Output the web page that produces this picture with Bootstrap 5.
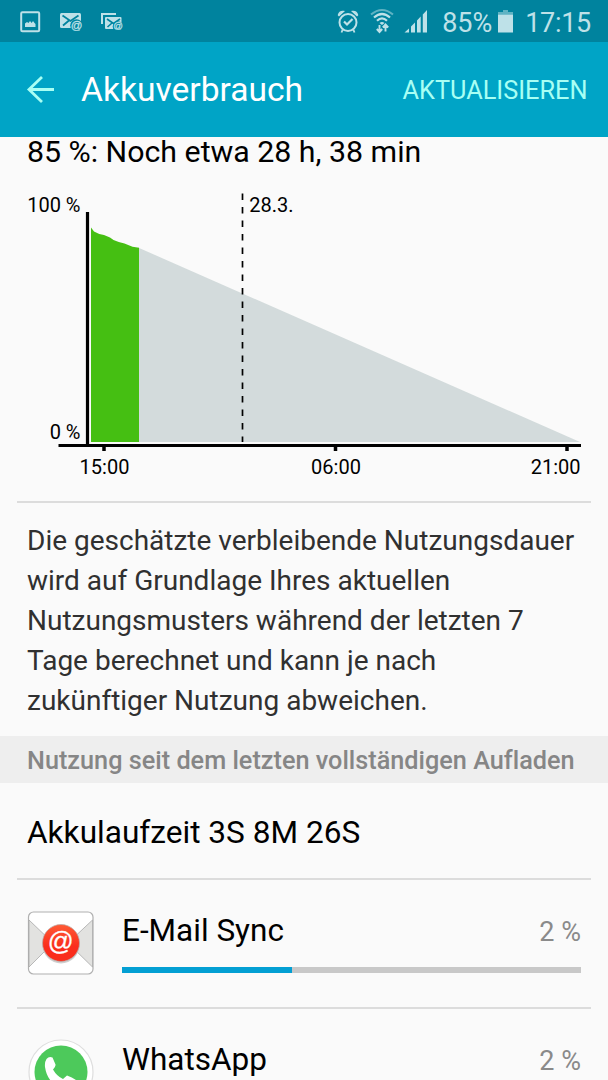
<!DOCTYPE html>
<html lang="de">
<head>
<meta charset="utf-8">
<meta name="viewport" content="width=device-width, initial-scale=1">
<title>Akkuverbrauch</title>
<link rel="stylesheet" href="https://cdn.jsdelivr.net/npm/bootstrap@5.3.0/dist/css/bootstrap.min.css">
<style>
  html, body { height: 1080px; overflow: hidden; }
  body { font-family: Roboto, sans-serif; background: #fafafa; color: #000; line-height: 1; font-variant-ligatures: none; }
  .status-bar { height: 42px; background: #00839e; color: #bee1e8; }
  .status-bar svg { display: block; flex: none; }
  .status-text { font-size: 27px; line-height: 38px; padding-top: 4px; white-space: nowrap; }
  .status-clock { letter-spacing: -.3px; margin: 0 17px 0 5px; }
  .app-bar { height: 94.5px; background: #00a4c6; }
  .app-title { font-size: 33.6px; color: #fff; white-space: nowrap; padding-top: 2px; margin-left: -1px; }
  .app-action { font-size: 25.3px; color: #a8fff4; white-space: nowrap; text-transform: uppercase; padding-top: 2px; margin-right: 20.5px; }
  .estimate { font-size: 30.3px; height: 46.5px; line-height: 30px; padding-left: 27px; }
  .usage-chart { display: block; height: 317.500px; }
  .usage-chart text { font-size: 20px; fill: #000; }
  .rule { height: 2px; margin: 0 17px; background: #dcdcdc; flex: none; }
  .note { font-size: 28px; line-height: 40px; color: #303030; padding: 18px 0 15.5px 27px; }
  .section-head { height: 47px; background: #eee; color: #868686; font-size: 25.250px; font-weight: 500; line-height: 49px; padding-left: 27px; white-space: nowrap; }
  .runtime { height: 95px; font-size: 31.600px; line-height: 100px; padding-left: 27px; }
  .app-row { height: 126.500px; padding: 0 27px; }
  .app-row-cut { height: 72px; overflow: hidden; }
  .app-icon { width: 67px; flex: none; }
  .mail-at { font-family: "Liberation Sans", sans-serif; }
  .app-body { margin-left: 28px; padding-top: 29px; }
  .app-name { font-size: 31.500px; line-height: 44px; }
  .app-share { font-size: 27px; line-height: 46px; color: #8a8a8a; }
  .usage-bar { height: 6px; border-radius: 0; background: #c8c8c8; margin-top: 12px; }
  .usage-bar .progress-bar { background: #039fd3; }
</style>
</head>
<body>
<div class="status-bar d-flex align-items-center">
  <svg width="140" height="42" viewBox="0 0 140 42" fill="none" stroke="#bee1e8">
    <rect x="21.200" y="12.200" width="18" height="19" rx="1.200" stroke-width="2"/>
    <path d="M25 27v-3.500l2-1.500 1.500 1 1.500-2 1.700 2 1.300-2 1.500 2 1 1V27z" fill="#bee1e8" stroke="none"/>
    <rect x="60" y="13" width="21" height="15" rx="1.500" fill="#bee1e8" stroke="none"/>
    <path d="M62.500 15.500l8 5.500 8-5.500M63 25.500l6-5" stroke="#00839e" stroke-width="1.800"/>
    <circle cx="76.500" cy="25.500" r="6.300" fill="#00839e" stroke="none"/>
    <text class="mail-at" x="76.500" y="29.200" text-anchor="middle" font-size="11.500" fill="#bee1e8" stroke="#bee1e8" stroke-width=".3">@</text>
    <path d="M102 24V14h14" stroke-width="2"/>
    <rect x="105" y="17" width="16.500" height="12" rx="1" fill="#bee1e8" stroke="none"/>
    <path d="M107 19l6.500 4.500 6.500-4.500M107.500 27l4.500-4" stroke="#00839e" stroke-width="1.600"/>
    <circle cx="118" cy="26.500" r="5.300" fill="#00839e" stroke="none"/>
    <text class="mail-at" x="118" y="29.400" text-anchor="middle" font-size="9.500" fill="#bee1e8" stroke="#bee1e8" stroke-width=".3">@</text>
  </svg>
  <svg class="ms-auto" width="108" height="42" viewBox="330 0 108 42" fill="none" stroke="#bee1e8">
    <circle cx="348" cy="22.500" r="8.500" stroke-width="2"/>
    <path d="M344 21.500l3 3 5.500-5.500" stroke-width="2.200"/>
    <path d="M338.500 15c.5-2.500 2.500-4 5-3.500l-4.500 4zM357.500 15c-.5-2.500-2.500-4-5-3.500l4.500 4z" fill="#bee1e8" stroke-width="1.400"/>
    <path d="M342.500 30l-1 2.500M353.500 30l1 2.500" stroke-width="1.800"/>
    <path d="M371 14.500Q382 5.500 393 14.500" stroke="#5fb3c3" stroke-width="2"/>
    <path d="M374 17.500Q382 10.500 390 17.500M377 20.800Q382 16 387 20.800" stroke-width="2.200"/>
    <path d="M379.500 23Q382 20.800 384.500 23L382 25z" fill="#bee1e8" stroke="none"/>
    <path d="M379.500 25v6.500M376.800 29l2.700 3 2.700-3M385.500 31.500V25M382.800 27.500l2.700-3 2.700 3" stroke-width="1.900"/>
    <path d="M404.500 32.500l4.500-4v4zM411 26.500l4-4v10h-4zM417 20.500l3.700-4v16H417zM422.800 14.500l4.200-4.500v22.500h-4.200z" fill="#bee1e8" stroke="none"/>
  </svg>
  <span class="status-text ms-1">85%</span>
  <svg width="28" height="42" viewBox="492 0 28 42">
    <path d="M498 14.500V12h5v-2h5v2h5v2.500z" fill="#5fb3c3"/><path d="M498 14.500h15v18h-15z" fill="#bee1e8"/>
  </svg>
  <span class="status-text status-clock">17:15</span>
</div>

<nav class="app-bar d-flex align-items-center">
  <svg width="82" height="94" viewBox="0 42 82 94" fill="none" stroke="#a8fff4" stroke-width="2.800"><path d="M54 89.500H29.500M42 77L29 89.500 42 102"/></svg>
  <span class="app-title">Akkuverbrauch</span>
  <span class="app-action ms-auto">Aktualisieren</span>
</nav>

<main>
  <div class="estimate">85 %: Noch etwa 28 h, 38 min</div>
  <svg class="usage-chart" width="608" height="317.500" viewBox="0 183 608 317.500">
    <path d="M138 247.500L580 442H138z" fill="#d3dbdc"/>
    <path d="M91 227.500l3 4q4 2.500 10 3.500l6 2.500 3.500 2.500q5 2 11 3.500l8 3.300 6.500 1V442H91z" fill="#45bf12"/>
    <path d="M87.500 212v233M58.500 445.500H581" stroke="#000" stroke-width="3.200"/>
    <path d="M104 445v6M335.500 445v6M567 445v6" stroke="#000" stroke-width="3.500"/>
    <path d="M242.500 193.500V442" stroke="#000" stroke-width="1.700" stroke-dasharray="6.600 6.900"/>
    <text x="80.500" y="212" text-anchor="end">100 %</text>
    <text x="80.500" y="439" text-anchor="end">0 %</text>
    <text x="249.200" y="212">28.3.</text>
    <text x="104.500" y="474" text-anchor="middle">15:00</text>
    <text x="336" y="474" text-anchor="middle">06:00</text>
    <text x="580.500" y="474" text-anchor="end">21:00</text>
  </svg>
  <div class="rule"></div>
  <p class="note mb-0">Die geschätzte verbleibende Nutzungsdauer<br>wird auf Grundlage Ihres aktuellen<br>Nutzungsmusters während der letzten 7<br>Tage berechnet und kann je nach<br>zukünftiger Nutzung abweichen.</p>
  <div class="section-head">Nutzung seit dem letzten vollständigen Aufladen</div>
  <div class="runtime">Akkulaufzeit 3S 8M 26S</div>
  <div class="rule"></div>
  <div class="app-row d-flex align-items-start">
    <svg class="app-icon" width="67" height="126" viewBox="27 880 67 126">
      <defs><linearGradient id="red" x1="0" y1="0" x2="0" y2="1"><stop offset="0" stop-color="#ff5b35"/><stop offset=".6" stop-color="#fa2d1c"/></linearGradient></defs>
      <rect x="28.500" y="912" width="64.500" height="62" rx="5" fill="#fff" stroke="#b0b0b0" stroke-width="1.200"/>
      <path d="M29 920L53 943 29 967zM92.500 920L68 943 92.500 967z" fill="#e2e2e0" stroke="#a9a9a9" stroke-width=".8"/>
      <circle cx="61" cy="945" r="18.500" fill="#cfcfcf"/>
      <circle cx="61" cy="943" r="18.500" fill="url(#red)" stroke="#b6aaa8" stroke-width=".7"/>
      <text class="mail-at" x="60.800" y="949.800" text-anchor="middle" font-size="25.500" fill="#fff" stroke="#fff" stroke-width=".3">@</text>
    </svg>
    <div class="app-body flex-grow-1">
      <div class="d-flex justify-content-between"><span class="app-name">E-Mail Sync</span><span class="app-share">2 %</span></div>
      <div class="progress usage-bar"><div class="progress-bar" style="width:37%"></div></div>
    </div>
  </div>
  <div class="rule"></div>
  <div class="app-row app-row-cut d-flex align-items-start">
    <svg class="app-icon" width="67" height="72" viewBox="27 1009 67 72">
      <circle cx="61" cy="1072" r="32" fill="#fff" stroke="#dedede" stroke-width="1.200"/>
      <circle cx="61" cy="1072" r="26.500" fill="#4dc95b"/>
      <path d="M46.500 1059q2.500-3 6-1.500l3 7q.5 1.500-2.500 5 4 7 10 9.500l4-3.500q5 1.500 9 4.500-1 7-8 8-20-1-23-21-.500-5 1.500-8z" fill="#fff"/>
    </svg>
    <div class="app-body flex-grow-1">
      <div class="d-flex justify-content-between"><span class="app-name">WhatsApp</span><span class="app-share">2 %</span></div>
    </div>
  </div>
</main>
<script src="https://cdn.jsdelivr.net/npm/bootstrap@5.3.0/dist/js/bootstrap.bundle.min.js"></script>
</body>
</html>
